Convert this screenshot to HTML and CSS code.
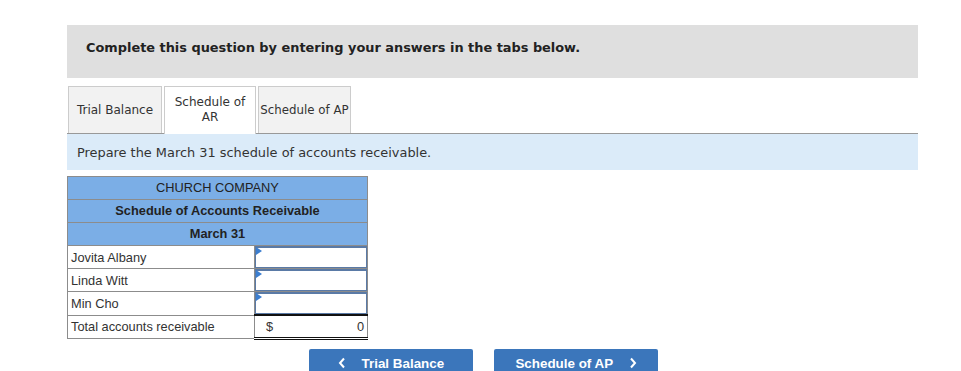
FILE: index.html
```html
<!DOCTYPE html>
<html lang="en">
<head>
  <meta charset="UTF-8">
  <title>Schedule of AR</title>
  <link rel="stylesheet" href="styles.css">
</head>
<body>
  <div class="page">
    <div class="prompt">Complete this question by entering your answers in the tabs below.</div>

    <div class="tabs">
      <div class="tab">Trial Balance</div>
      <div class="tab active">Schedule of<br>AR</div>
      <div class="tab">Schedule of AP</div>
    </div>

    <div class="instructions">Prepare the March 31 schedule of accounts receivable.</div>

    <table class="sheet">
      <tr class="head"><td colspan="2">CHURCH COMPANY</td></tr>
      <tr class="head bold"><td colspan="2">Schedule of Accounts Receivable</td></tr>
      <tr class="head bold"><td colspan="2">March 31</td></tr>
      <tr><td class="label">Jovita Albany</td><td class="entry"><div class="box"><span class="flag"></span></div></td></tr>
      <tr><td class="label">Linda Witt</td><td class="entry"><div class="box"><span class="flag"></span></div></td></tr>
      <tr><td class="label">Min Cho</td><td class="entry"><div class="box"><span class="flag"></span></div></td></tr>
      <tr class="total">
        <td class="label">Total accounts receivable</td>
        <td class="sum"><div class="sum-row"><span>$</span><span>0</span></div></td>
      </tr>
    </table>

    <div class="nav">
      <div class="btn">
        <svg class="chev" width="8" height="12" viewBox="0 0 8 12"><polyline points="6,1.5 2,6 6,10.5" fill="none" stroke="#ffffff" stroke-width="2"/></svg>
        Trial Balance
      </div>
      <div class="btn">
        Schedule of AP
        <svg class="chev after" width="8" height="12" viewBox="0 0 8 12"><polyline points="2,1.5 6,6 2,10.5" fill="none" stroke="#ffffff" stroke-width="2"/></svg>
      </div>
    </div>
  </div>
</body>
</html>
```

FILE: styles.css
```css
body {
  margin: 0;
  background: #ffffff;
  color: #222222;
  font-family: "DejaVu Sans", Verdana, sans-serif;
  overflow: hidden;
}
.page {
  width: 851px;
  margin: 25px 0 0 67px;
}
.prompt {
  background: #dfdfdf;
  height: 53px;
  box-sizing: border-box;
  padding: 15px 19px 0;
  font-size: 12.9px;
  font-weight: bold;
  color: #222222;
}
.tabs {
  display: flex;
  gap: 2px;
  margin-top: 8px;
  border-bottom: 1px solid #999999;
  height: 47px;
  padding-left: 1px;
}
.tab {
  box-sizing: border-box;
  height: 47px;
  border: 1px solid #cccccc;
  border-bottom: none;
  background: #f2f2f2;
  font-size: 12px;
  color: #333333;
  display: flex;
  align-items: center;
  justify-content: center;
  text-align: center;
  line-height: 15px;
  padding: 0 4px;
}
.tab:nth-child(1) { width: 94px; }
.tab:nth-child(2) { width: 92px; }
.tab:nth-child(3) {
  width: 93px;
  padding: 0;
  white-space: nowrap;
  font-size: 11.8px;
}
.tab.active {
  background: #ffffff;
  height: 48px;
  padding-bottom: 2px;
}
.instructions {
  background: #dbebf9;
  height: 36px;
  box-sizing: border-box;
  padding: 11px 10px 0;
  font-size: 12.9px;
  color: #333333;
}
.sheet {
  margin-top: 6px;
  border-collapse: collapse;
  width: 301px;
  font-family: "Liberation Sans", Arial, sans-serif;
  font-size: 12.8px;
  color: #333333;
}
.sheet td {
  border: 1px solid #8c8c8c;
  height: 23px;
  padding: 0 3px;
  box-sizing: border-box;
}
.head td {
  background: #7baee6;
  text-align: center;
  color: #222222;
  padding-bottom: 2px;
}
.head.bold td { font-weight: bold; }
.label { width: 187px; }
.sheet td.entry {
  padding: 0;
}
.box {
  position: relative;
  height: 22px;
  box-sizing: border-box;
  border: 1px solid #5a7aa6;
  border-top-width: 2px;
}
.flag {
  position: absolute;
  left: 0;
  top: -1px;
  width: 0;
  height: 0;
  border-top: 4px solid transparent;
  border-bottom: 4px solid transparent;
  border-left: 6px solid #3b7ed0;
}
.sheet td.sum {
  padding: 0;
  border-top: 2px solid #111111;
  border-bottom: 3px double #111111;
}
.sum-row {
  display: flex;
  justify-content: space-between;
  padding: 0 3px 0 11px;
}
.nav {
  display: flex;
  gap: 21px;
  margin: 9px 0 0 242px;
}
.btn {
  width: 164px;
  height: 30px;
  box-sizing: border-box;
  background: #3b76bb;
  color: #ffffff;
  border-radius: 2px 2px 0 0;
  font-family: "Liberation Sans", Arial, sans-serif;
  font-weight: bold;
  font-size: 13.4px;
  text-align: center;
  padding-top: 7px;
}
.chev { margin-right: 12px; vertical-align: -1px; }
.chev.after { margin: 0 0 0 12px; }
```
